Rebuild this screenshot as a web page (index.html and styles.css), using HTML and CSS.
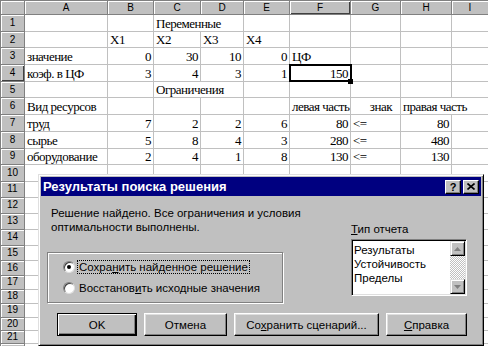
FILE: index.html
```html
<!DOCTYPE html>
<html lang="ru">
<head>
    <meta charset="UTF-8">
    <title>Поиск решения</title>
    <link rel="stylesheet" href="styles.css">
</head>
<body>
    <table class="sheet">
        <colgroup>
            <col class="c-hdr"><col class="c-a"><col class="c-b"><col class="c-c"><col class="c-d">
            <col class="c-e"><col class="c-f"><col class="c-g"><col class="c-h"><col class="c-i">
        </colgroup>
        <tr class="hd">
            <th></th><th>A</th><th>B</th><th>C</th><th>D</th><th>E</th><th class="sel">F</th><th>G</th><th>H</th><th>I</th>
        </tr>
        <tr>
            <th>1</th><td></td><td></td><td colspan="2">Переменные</td><td></td><td></td><td></td><td></td><td></td>
        </tr>
        <tr>
            <th>2</th><td></td><td>X1</td><td>X2</td><td>X3</td><td>X4</td><td></td><td></td><td></td><td></td>
        </tr>
        <tr>
            <th>3</th><td>значение</td><td class="num">0</td><td class="num">30</td><td class="num">10</td><td class="num">0</td><td>ЦФ</td><td></td><td></td><td></td>
        </tr>
        <tr>
            <th class="sel">4</th><td>коэф. в ЦФ</td><td class="num">3</td><td class="num">4</td><td class="num">3</td><td class="num">1</td><td class="num active">150</td><td></td><td></td><td></td>
        </tr>
        <tr>
            <th>5</th><td></td><td></td><td colspan="2">Ограничения</td><td></td><td></td><td></td><td></td><td></td>
        </tr>
        <tr>
            <th>6</th><td>Вид ресурсов</td><td></td><td></td><td></td><td></td><td>левая часть</td><td class="num sign">знак</td><td colspan="2">правая часть</td>
        </tr>
        <tr>
            <th>7</th><td>труд</td><td class="num">7</td><td class="num">2</td><td class="num">2</td><td class="num">6</td><td class="num">80</td><td>&lt;=</td><td class="num">80</td><td></td>
        </tr>
        <tr>
            <th>8</th><td>сырье</td><td class="num">5</td><td class="num">8</td><td class="num">4</td><td class="num">3</td><td class="num">280</td><td>&lt;=</td><td class="num">480</td><td></td>
        </tr>
        <tr>
            <th>9</th><td>оборудование</td><td class="num">2</td><td class="num">4</td><td class="num">1</td><td class="num">8</td><td class="num">130</td><td>&lt;=</td><td class="num">130</td><td></td>
        </tr>
        <tr>
            <th>10</th><td></td><td></td><td></td><td></td><td></td><td></td><td></td><td></td><td></td>
        </tr>
        <tr class="h16">
            <th>11</th><td></td><td></td><td></td><td></td><td></td><td></td><td></td><td></td><td></td>
        </tr>
        <tr class="h16">
            <th>12</th><td></td><td></td><td></td><td></td><td></td><td></td><td></td><td></td><td></td>
        </tr>
        <tr class="h16">
            <th>13</th><td></td><td></td><td></td><td></td><td></td><td></td><td></td><td></td><td></td>
        </tr>
        <tr class="h16">
            <th>14</th><td></td><td></td><td></td><td></td><td></td><td></td><td></td><td></td><td></td>
        </tr>
        <tr class="h15">
            <th>15</th><td></td><td></td><td></td><td></td><td></td><td></td><td></td><td></td><td></td>
        </tr>
        <tr class="h15">
            <th>16</th><td></td><td></td><td></td><td></td><td></td><td></td><td></td><td></td><td></td>
        </tr>
        <tr class="h14">
            <th>17</th><td></td><td></td><td></td><td></td><td></td><td></td><td></td><td></td><td></td>
        </tr>
        <tr class="h14">
            <th>18</th><td></td><td></td><td></td><td></td><td></td><td></td><td></td><td></td><td></td>
        </tr>
        <tr class="h14">
            <th>19</th><td></td><td></td><td></td><td></td><td></td><td></td><td></td><td></td><td></td>
        </tr>
        <tr class="h13">
            <th>20</th><td></td><td></td><td></td><td></td><td></td><td></td><td></td><td></td><td></td>
        </tr>
        <tr class="h13">
            <th>21</th><td></td><td></td><td></td><td></td><td></td><td></td><td></td><td></td><td></td>
        </tr>
        <tr class="h13">
            <th></th><td></td><td></td><td></td><td></td><td></td><td></td><td></td><td></td><td></td>
        </tr>
    </table>

    <div class="dialog">
        <div class="title-bar">
            <span class="title">Результаты поиска решения</span>
            <div class="title-buttons">
                <span class="tbtn">?</span>
                <span class="tbtn">
                    <svg width="8" height="7" viewBox="0 0 8 7"><path d="M0.5 0.5 L7.5 6.5 M7.5 0.5 L0.5 6.5" stroke="#000" stroke-width="1.6"/></svg>
                </span>
            </div>
        </div>
        <div class="dialog-body">
            <div class="main">
                <div class="left">
                    <p class="msg">Решение найдено. Все ограничения и условия<br>оптимальности выполнены.</p>
                    <div class="group">
                        <div class="radio"><span class="circle checked"></span><span class="focus">Сохра<u>н</u>ить найденное решение</span></div>
                        <div class="radio"><span class="circle"></span><span class="caption">Восстанов<u>и</u>ть исходные значения</span></div>
                    </div>
                </div>
                <div class="right">
                    <div class="label"><u>Т</u>ип отчета</div>
                    <div class="listbox">
                        <div class="items">
                            <div>Результаты</div>
                            <div>Устойчивость</div>
                            <div>Пределы</div>
                        </div>
                        <div class="scrollbar">
                            <span class="sb-btn"><svg width="7" height="4" viewBox="0 0 7 4"><polygon points="3.5,0 7,4 0,4" fill="#808080"/></svg></span>
                            <span class="track"></span>
                            <span class="sb-btn"><svg width="7" height="4" viewBox="0 0 7 4"><polygon points="0,0 7,0 3.5,4" fill="#808080"/></svg></span>
                        </div>
                    </div>
                </div>
            </div>
            <div class="buttons">
                <button class="btn default btn-ok">OK</button>
                <button class="btn btn-cancel">Отмена</button>
                <button class="btn btn-save">Со<u>х</u>ранить сценарий...</button>
                <button class="btn btn-help"><u>С</u>правка</button>
            </div>
        </div>
    </div>
</body>
</html>
```

FILE: styles.css
```css
body {
    margin: 0;
    width: 488px;
    height: 346px;
    overflow: hidden;
    position: relative;
    background: #fff;
    font-family: "Liberation Serif", "Times New Roman", serif;
}

/* spreadsheet */
.sheet {
    border-collapse: collapse;
    table-layout: fixed;
    width: 488px;
    font-size: 13px;
    letter-spacing: -0.5px;
    color: #000;
}
.c-hdr { width: 24px; }
.c-a { width: 83px; }
.c-b { width: 46px; }
.c-c { width: 47px; }
.c-d { width: 43px; }
.c-e { width: 46px; }
.c-f { width: 61px; }
.c-g { width: 50px; }
.c-h { width: 51px; }
.c-i { width: 37px; }
.sheet tr {
    height: 16.7px;
}
.sheet tr.hd { height: 14px; }
.sheet tr.h16 { height: 16px; }
.sheet tr.h15 { height: 15px; }
.sheet tr.h14 { height: 14px; }
.sheet tr.h13 { height: 13px; }
.sheet th {
    background: #c0c0c0;
    border: 1px solid #808080;
    box-shadow: inset 1px 1px #fff;
    padding: 0;
    font: normal 10px "Liberation Sans", Arial, sans-serif;
    letter-spacing: 0;
    color: #000;
    text-align: center;
    line-height: 12px;
}
.sheet th.sel {
    box-shadow: inset 1px 1px #fff, inset -1px -1px #404040;
}
.sheet td {
    border: 1px solid #c0c0c0;
    padding: 0 2px;
    white-space: nowrap;
    overflow: hidden;
    vertical-align: bottom;
    line-height: 14px;
}
.sheet td.num {
    text-align: right;
}
.sheet td.sign {
    padding-right: 8px;
}
.sheet td.active {
    position: relative;
    overflow: visible;
    outline: 2px solid #000;
    outline-offset: -1px;
}
.sheet td.active::after {
    content: "";
    position: absolute;
    right: -3px;
    bottom: -3px;
    width: 5px;
    height: 5px;
    background: #000;
}

/* dialog */
.dialog {
    position: absolute;
    left: 38px;
    top: 174px;
    width: 446px;
    height: 172px;
    box-sizing: border-box;
    padding: 2px;
    background: #c0c0c0;
    border: 1px solid;
    border-color: #dfdfdf #000 #000 #dfdfdf;
    box-shadow: inset 1px 1px #fff, inset -1px -1px #808080;
    font-family: "Liberation Sans", Arial, sans-serif;
    font-size: 11.5px;
    color: #000;
}
.title-bar {
    height: 19px;
    background: #000080;
    color: #fff;
    display: flex;
    align-items: center;
    justify-content: space-between;
    padding: 0 2px;
}
.title {
    font-weight: bold;
    font-size: 13px;
}
.title-buttons {
    display: flex;
    gap: 2px;
}
.tbtn {
    width: 16px;
    height: 14px;
    box-sizing: border-box;
    background: #c0c0c0;
    border: 1px solid;
    border-color: #fff #000 #000 #fff;
    box-shadow: inset -1px -1px #808080;
    color: #000;
    font-weight: bold;
    font-size: 11px;
    line-height: 12px;
    display: flex;
    align-items: center;
    justify-content: center;
}
.dialog-body {
    padding: 10px 14px 0 6px;
}
.main {
    display: flex;
    justify-content: space-between;
    align-items: flex-start;
}
.left {
    width: 236px;
}
.msg {
    margin: 0 0 0 4px;
    line-height: 14px;
    white-space: nowrap;
}
.group {
    margin-top: 18px;
    height: 51px;
    box-sizing: border-box;
    border: 1px solid #808080;
    box-shadow: inset 1px 1px #fff, 1px 1px #fff;
    padding: 7px 0 0 15px;
}
.radio {
    display: flex;
    align-items: center;
    height: 14px;
    gap: 3px;
    white-space: nowrap;
}
.radio + .radio {
    margin-top: 7px;
}
.circle {
    width: 12px;
    height: 12px;
    box-sizing: border-box;
    border-radius: 50%;
    background: #fff;
    border: 1px solid;
    border-color: #808080 #dfdfdf #dfdfdf #808080;
    box-shadow: inset 1px 1px #404040;
    display: flex;
    align-items: center;
    justify-content: center;
}
.circle.checked::after {
    content: "";
    width: 4px;
    height: 4px;
    border-radius: 50%;
    background: #000;
}
.focus {
    outline: 1px dotted #000;
    padding: 0 1px;
}
.caption {
    padding: 0 1px;
}
.right {
    width: 116px;
    padding-top: 16px;
}
.label {
    line-height: 14px;
}
.listbox {
    margin-top: 3px;
    height: 57px;
    box-sizing: border-box;
    display: flex;
    background: #fff;
    border: 1px solid;
    border-color: #808080 #fff #fff #808080;
    box-shadow: inset 1px 1px #000, inset -1px -1px #dfdfdf;
}
.items {
    flex: 1;
    padding: 3px 0 0 2px;
    line-height: 14px;
}
.scrollbar {
    width: 15px;
    margin: 1px 1px 1px 0;
    display: flex;
    flex-direction: column;
}
.sb-btn {
    height: 15px;
    box-sizing: border-box;
    background: #c0c0c0;
    border: 1px solid;
    border-color: #dfdfdf #000 #000 #dfdfdf;
    box-shadow: inset 1px 1px #fff, inset -1px -1px #808080;
    display: flex;
    align-items: center;
    justify-content: center;
}
.track {
    flex: 1;
    background: repeating-conic-gradient(#c0c0c0 0 25%, #fff 0 50%) 0 0 / 2px 2px;
}
.buttons {
    display: flex;
    gap: 7px;
    margin: 10px 0 0 10px;
}
.btn {
    height: 23px;
    box-sizing: border-box;
    padding: 0;
    background: #c0c0c0;
    border: 1px solid;
    border-color: #fff #000 #000 #fff;
    box-shadow: inset -1px -1px #808080, inset 1px 1px #dfdfdf;
    font: 11.5px "Liberation Sans", Arial, sans-serif;
    color: #000;
}
.btn.default {
    border-color: #000;
    box-shadow: inset 1px 1px #fff, inset -1px -1px #000, inset -2px -2px #808080;
}
.btn-ok { width: 80px; }
.btn-cancel { width: 83px; }
.btn-save { width: 145px; }
.btn-help { width: 81px; }
```
